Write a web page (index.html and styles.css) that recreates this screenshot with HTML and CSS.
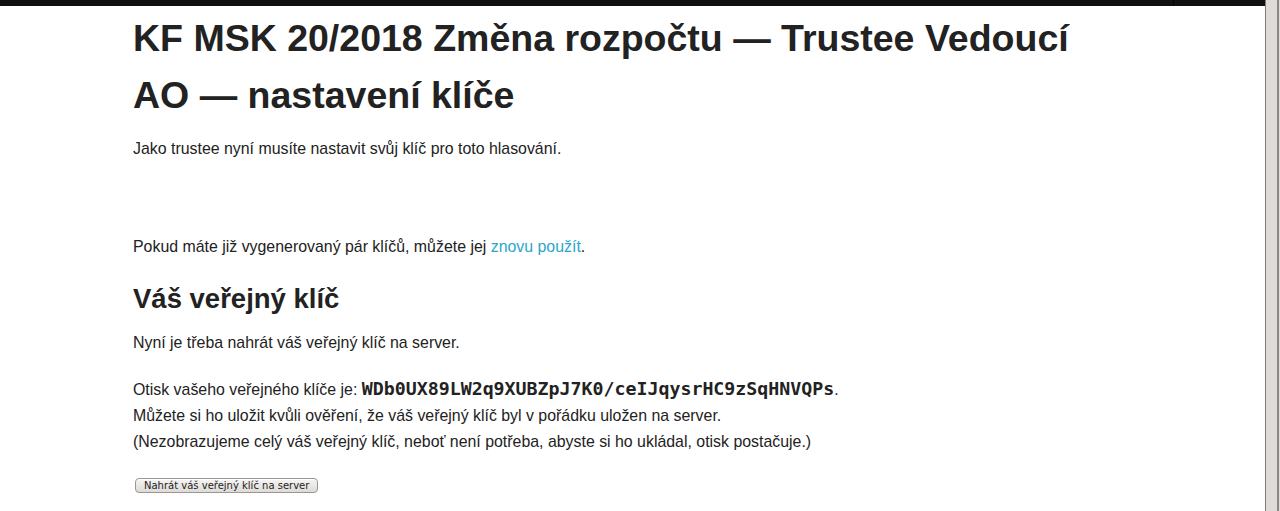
FILE: index.html
```html
<!DOCTYPE html>
<html lang="cs">
<head>
<meta charset="utf-8">
<title>Nastavení klíče</title>
<link rel="stylesheet" href="styles.css">
</head>
<body>
<div class="page">
  <div class="topbar"><div class="topbar-left"></div><div class="topbar-right"></div></div>
  <div class="content">
    <h1 class="title">KF MSK 20/2018 Změna rozpočtu — Trustee Vedoucí AO — nastavení klíče</h1>
    <p class="text">Jako trustee nyní musíte nastavit svůj klíč pro toto hlasování.</p>
    <div class="spacer"></div>
    <p class="text">Pokud máte již vygenerovaný pár klíčů, můžete jej <a class="link" href="#">znovu použít</a>.</p>
    <h2 class="subtitle">Váš veřejný klíč</h2>
    <p class="text">Nyní je třeba nahrát váš veřejný klíč na server.</p>
    <p class="text">Otisk vašeho veřejného klíče je: <tt class="fingerprint">WDb0UX89LW2q9XUBZpJ7K0/ceIJqysrHC9zSqHNVQPs</tt>.<br>
    Můžete si ho uložit kvůli ověření, že váš veřejný klíč byl v pořádku uložen na server.<br>
    (Nezobrazujeme celý váš veřejný klíč, neboť není potřeba, abyste si ho ukládal, otisk postačuje.)</p>
    <form class="upload">
      <button type="button" class="btn">Nahrát váš veřejný klíč na server</button>
    </form>
  </div>
</div>
<div class="scrollbar"><div class="scroll-track"></div></div>
</body>
</html>
```

FILE: styles.css
```css
html, body {
  margin: 0;
  padding: 0;
  height: 511px;
  overflow: hidden;
  background: #fff;
}
body {
  display: flex;
  font-family: "Liberation Sans", Arial, sans-serif;
  color: #222;
}
.page {
  flex: 1;
  min-width: 0;
}
.topbar {
  height: 6px;
  display: flex;
  background: #111;
}
.topbar-left {
  width: 1173px;
  border-right: 1px solid #050505;
}
.topbar-right {
  flex: 1;
}
.content {
  width: 999px;
  margin: 0 auto;
  padding-top: 4px;
}
.title {
  margin: 0 0 12px;
  font-size: 37.5px;
  line-height: 57px;
  font-weight: bold;
  color: #222;
}
.text {
  margin: 0 0 20px;
  font-size: 15.9px;
  line-height: 26px;
}
.spacer {
  height: 52px;
}
.link {
  color: #2ba6cb;
  text-decoration: none;
}
.subtitle {
  margin: 0 0 12px;
  font-size: 27.5px;
  line-height: 38px;
  font-weight: bold;
}
.fingerprint {
  font-family: "DejaVu Sans Mono", "Liberation Mono", monospace;
  font-weight: bold;
  font-size: 18.25px;
}
.upload {
  margin: 0;
  padding-top: 0;
}
.btn {
  margin-left: 2px;
  height: 15px;
  padding: 0 8px;
  font-family: "DejaVu Sans", sans-serif;
  font-size: 10px;
  line-height: 13px;
  color: #222;
  border: 1px solid #9a9793;
  border-radius: 4px;
  background: linear-gradient(#f6f5f4, #dedbd7);
  box-shadow: inset 0 1px 0 #fff;
}
.scrollbar {
  width: 15px;
  height: 511px;
  background: #dedbd8;
  border-left: 1px solid #7f7c78;
  box-sizing: border-box;
  display: flex;
  justify-content: flex-end;
}
.scroll-track {
  width: 2px;
  margin-right: 1px;
  background: #8c8985;
}
```
